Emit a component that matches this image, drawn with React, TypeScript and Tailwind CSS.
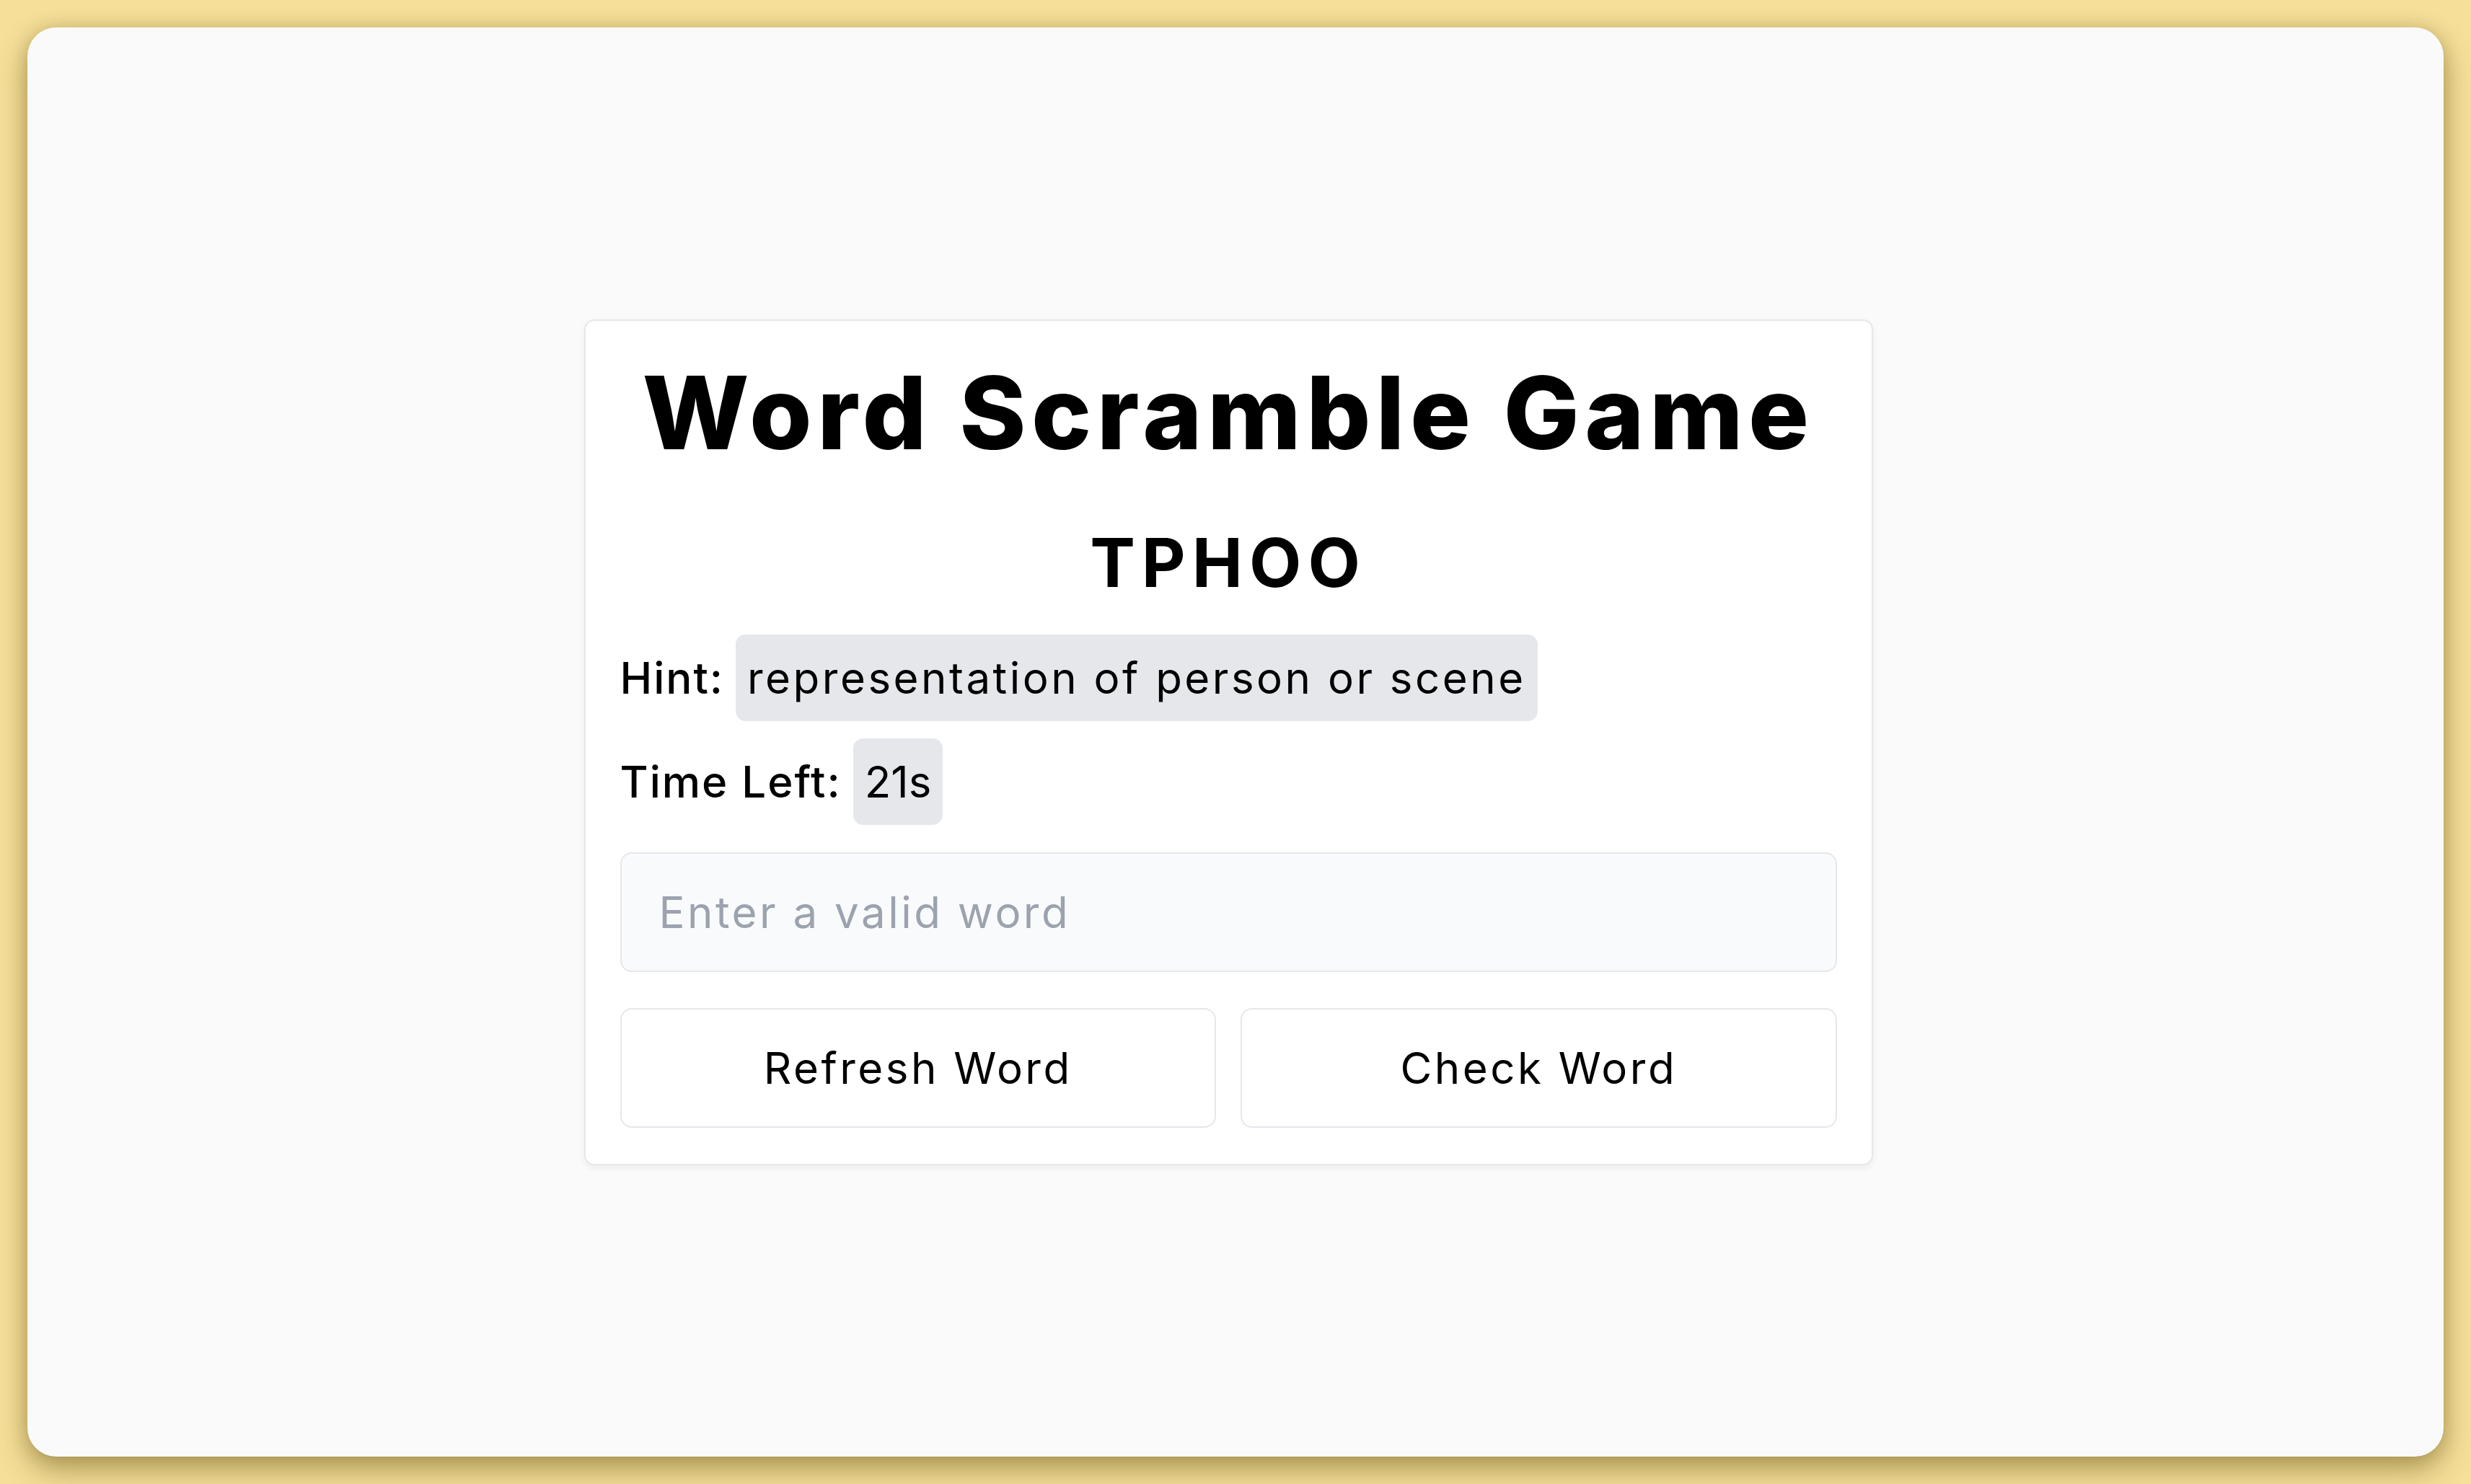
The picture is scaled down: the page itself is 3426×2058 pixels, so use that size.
import React from "react";

export default function App() {
  return (
    <div
      className="w-[3426px] h-[2058px] bg-[#f5df99] flex p-[38px]"
      style={{ fontFamily: "Inter, 'Noto Sans', sans-serif" }}
    >
      <div className="flex-1 rounded-[40px] bg-[#fafafa] shadow-[0_18px_40px_rgba(90,70,10,0.45),0_0_24px_rgba(90,70,10,0.18)] flex items-center justify-center pr-[20px]">
        <div className="w-[1787px] bg-white border-2 border-[#e5e7eb] rounded-[14px] shadow-[0_4px_10px_rgba(0,0,0,0.06)] pt-[48px] px-[48px] pb-[50px] flex flex-col text-black">
          <h1 className="mt-[9px] text-center text-[140px] leading-none font-extrabold tracking-[7.4px]">
            Word Scramble Game
          </h1>
          <div className="mt-[91px] text-center text-[94px] leading-none font-bold tracking-[9px]">
            TPHOO
          </div>
          <div className="mt-[53px] flex items-center">
            <span className="text-[60px] font-medium tracking-[2px] mr-[16px]">Hint:</span>
            <span className="bg-[#e5e7eb] rounded-[14px] px-[16px] py-[24px] text-[60px] leading-[72px] tracking-[3.5px]">
              representation of person or scene
            </span>
          </div>
          <div className="mt-[24px] flex items-center">
            <span className="text-[60px] font-medium tracking-[2px] mr-[16px]">Time Left:</span>
            <span className="bg-[#e5e7eb] rounded-[14px] px-[16px] py-[24px] text-[60px] leading-[72px] tracking-[0px]">
              21s
            </span>
          </div>
          <input
            type="text"
            placeholder="Enter a valid word"
            className="mt-[38px] h-[166px] w-full bg-[#f9fafb] border-2 border-[#e5e7eb] rounded-[16px] px-[52px] text-[60px] tracking-[3.5px] text-black placeholder:text-[#9ca3af] outline-none"
          />
          <div className="mt-[50px] grid grid-cols-2 gap-[34px]">
            <button className="h-[166px] bg-white border-2 border-[#e5e7eb] rounded-[16px] text-[60px] tracking-[3.5px]">
              Refresh Word
            </button>
            <button className="h-[166px] bg-white border-2 border-[#e5e7eb] rounded-[16px] text-[60px] tracking-[3.5px]">
              Check Word
            </button>
          </div>
        </div>
      </div>
    </div>
  );
}
